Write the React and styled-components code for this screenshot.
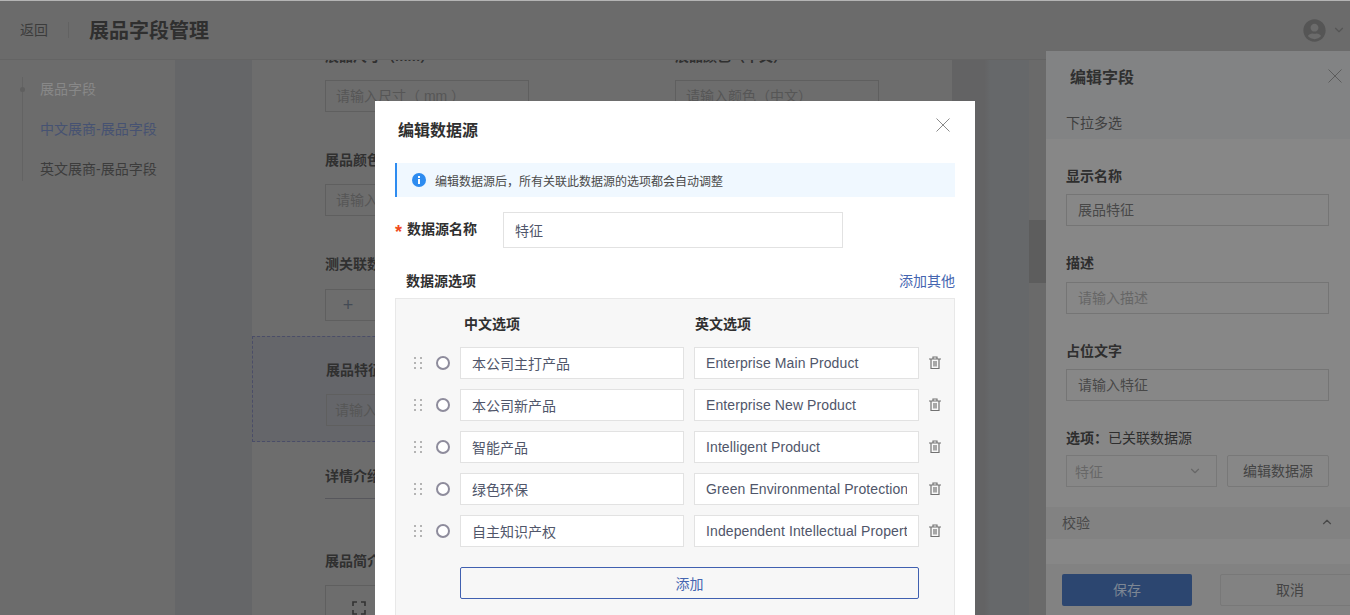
import React from "react";
import styled, { createGlobalStyle } from "styled-components";
import { ChevronDown, ChevronUp } from "lucide-react";
import { FaUserCircle } from "react-icons/fa";

const FONT = `"Liberation Sans", "Noto Sans CJK SC", sans-serif`;

const GlobalStyle = createGlobalStyle`
  html, body { margin: 0; padding: 0; height: 100%; overflow: hidden; }
  body { font-family: ${FONT}; font-size: 14px; }
  * { box-sizing: border-box; }
`;

const Page = styled.div`
  position: relative;
  width: 1350px;
  height: 615px;
  overflow: hidden;
  display: flex;
  flex-direction: column;
  background: #6d6d6d;
`;

const Header = styled.header`
  flex: 0 0 60px;
  display: flex;
  align-items: center;
  padding: 0 4px 0 20px;
  background: #6b6b6b;
  border-top: 1px solid #b4b4b4;
  border-bottom: 1px solid #646464;
  position: relative;
  z-index: 1;
`;

const Back = styled.span`
  font-size: 14px;
  color: #3c3c3c;
  padding-right: 20px;
  border-right: 1px solid #626262;
  line-height: 16px;
`;

const PageTitle = styled.h1`
  margin: 0 0 2px 20px;
  font-size: 20px;
  font-weight: 700;
  color: #2f2f2f;
`;

const User = styled.div`
  margin-left: auto;
  display: flex;
  align-items: center;
  gap: 6px;
  color: #555555;
`;

const Body = styled.div`
  flex: 1;
  display: flex;
  min-height: 0;
`;

const Side = styled.nav`
  flex: 0 0 175px;
  padding: 17px 0 0 22px;
  background: #6c6c6c;
`;

const SideList = styled.ul`
  list-style: none;
  margin: 0;
  padding: 0 0 0 17px;
  height: 104px;
  border-left: 1px solid #636363;
  position: relative;
`;

const SideDot = styled.i`
  position: absolute;
  left: -3px;
  top: 10px;
  width: 5px;
  height: 5px;
  border-radius: 50%;
  background: #5f5f5f;
`;

const SideItem = styled.li`
  height: 40px;
  line-height: 24px;
  color: ${(p) => p.$color};
`;

const Gutter = styled.div`
  flex: 0 0 77px;
  background: #656668;
`;

const Main = styled.main`
  flex: 0 0 700px;
  background: #6d6d6d;
  overflow: hidden;
`;

const Scrolled = styled.div`
  margin-top: -14px;
`;

const FieldRow = styled.div`
  display: grid;
  grid-template-columns: 350px 204px;
  padding: 0 0 0 73px;
  margin-bottom: ${(p) => p.$gap || 0}px;
`;

const Label = styled.div`
  font-size: 14px;
  font-weight: 700;
  line-height: 20px;
  margin-bottom: 14px;
  color: #303030;
  white-space: nowrap;
`;

const GhostInput = styled.div`
  width: 204px;
  height: 32px;
  line-height: 30px;
  padding: 0 ${(p) => p.$pad || 10}px;
  border: 1px solid #5f5f5f;
  color: #565656;
  white-space: nowrap;
  overflow: hidden;
`;

const PlusBox = styled.div`
  width: 60px;
  height: 32px;
  margin-top: 15px;
  padding-right: 14px;
  line-height: 30px;
  text-align: center;
  font-size: 18px;
  border: 1px solid #5f5f5f;
  color: #444b55;
`;

const Dashed = styled.section`
  height: 106px;
  margin-bottom: 24px;
  padding: 23px 0 0 73px;
  border: 1px dashed #4a4d68;
  border-right: 0;
  background: #65666a;
`;

const SectionHead = styled.div`
  margin: 0 73px 52px;
  height: 33px;
  line-height: 20px;
  font-weight: 700;
  color: #303030;
  border-bottom: 1px solid #57575c;
`;

const FullBox = styled.div`
  margin-left: 73px;
  width: 560px;
  height: 80px;
  padding: 15px 26px;
  border: 1px solid #5f5f5f;
  color: #333;
`;

const ScrollGutter = styled.div`
  flex: 0 0 77px;
  background: linear-gradient(90deg, #636364 0%, #636364 42%, #66686a 50%, #66686a 100%);
`;

const ScrollTrack = styled.div`
  flex: 1;
  display: flex;
  flex-direction: column;
  background: #6a6a6a;
  color: #353535;
`;

const ScrollBtn = styled.div`
  height: 17px;
  display: flex;
  align-items: center;
  justify-content: center;
`;

const ScrollThumb = styled.div`
  height: 63px;
  margin-top: 143px;
  margin-bottom: auto;
  background: #5d5d5d;
`;

const Drawer = styled.aside`
  position: absolute;
  left: 1046px;
  top: 51px;
  bottom: 0;
  width: 304px;
  display: flex;
  flex-direction: column;
  background: #878787;
  z-index: 2;
`;

const DrawerHead = styled.div`
  background: #828384;
  height: 88px;
  padding: 17px 20px 0 20px;
  position: relative;
`;

const DrawerTitle = styled.h3`
  margin: 0 0 0 4px;
  font-size: 16px;
  line-height: 20px;
  font-weight: 700;
  color: #303030;
`;

const DrawerKind = styled.div`
  margin-top: 25px;
  line-height: 20px;
  color: #404040;
`;

const DrawerForm = styled.div`
  padding: 27px 21px 0 20px;
  height: 368px;
`;

const DrawerLabel = styled.div`
  font-weight: 700;
  line-height: 20px;
  margin-bottom: ${(p) => p.$gap || 8}px;
  color: #2e2e2e;
  & > span { font-weight: 400; }
`;

const DrawerInput = styled.div`
  height: 32px;
  line-height: 30px;
  padding: 0 11px;
  border: 1px solid #757575;
  color: ${(p) => (p.$empty ? "#666" : "#484848")};
  margin-bottom: 27px;
`;

const SelectRow = styled.div`
  display: flex;
  gap: 10px;
  margin-top: -1px;
`;

const SelectBox = styled.div`
  width: 151px;
  height: 32px;
  padding: 0 14px 0 8px;
  display: flex;
  align-items: center;
  justify-content: space-between;
  border: 1px solid #787878;
  color: #676767;
`;

const GhostBtn = styled.div`
  flex: none;
  width: ${(p) => p.$w}px;
  height: 32px;
  line-height: 30px;
  text-align: center;
  border: 1px solid #787878;
  border-radius: 2px;
  color: #444;
`;

const Collapse = styled.div`
  height: 32px;
  padding: 0 16px 2px;
  display: flex;
  align-items: center;
  justify-content: space-between;
  background: #828282;
  color: #484848;
`;

const DrawerFoot = styled.div`
  margin-top: 25px;
  flex: 1;
  padding: 10px 0 0 16px;
  display: flex;
  gap: 28px;
  background: #828282;
`;

const SaveBtn = styled.div`
  flex: none;
  width: 130px;
  height: 32px;
  line-height: 32px;
  text-align: center;
  border-radius: 2px;
  background: #2c4670;
  color: #7d8794;
`;

const CloseLine = styled.svg`
  position: absolute;
  right: ${(p) => p.$right}px;
  top: ${(p) => p.$top}px;
  color: ${(p) => p.$color};
`;

const Modal = styled.div`
  position: absolute;
  left: 375px;
  top: 101px;
  width: 600px;
  height: 514px;
  overflow: hidden;
  padding: 0 20px;
  background: #fff;
  z-index: 3;
`;

const ModalTitle = styled.h2`
  margin: 0 0 0 3px;
  padding-top: 20px;
  height: 62px;
  font-size: 16px;
  line-height: 20px;
  font-weight: 700;
  color: #303030;
`;

const Alert = styled.div`
  height: 34px;
  display: flex;
  align-items: center;
  gap: 9px;
  padding-left: 15px;
  border-left: 2px solid #2e8cf0;
  background: #f0f8ff;
  font-size: 12px;
  color: #4a4a4a;
`;

const NameRow = styled.div`
  margin-top: 15px;
  display: flex;
  align-items: flex-start;
`;

const NameLabel = styled.label`
  width: 108px;
  padding-top: 7px;
  line-height: 20px;
  font-weight: 700;
  color: #303030;
  &::before {
    content: "*";
    display: inline-block;
    width: 12px;
    font-size: 18px;
    line-height: 1;
    vertical-align: -4px;
    color: #f04a20;
  }
`;

const TextInput = styled.input`
  display: block;
  width: ${(p) => p.$w}px;
  height: ${(p) => p.$h}px;
  padding: 0 11px;
  border: 1px solid #e2e2e2;
  border-radius: 0;
  outline: none;
  background: #fff;
  font-family: ${FONT};
  font-size: 14px;
  color: #50566a;
`;

const OptionHead = styled.div`
  margin-top: 23px;
  height: 20px;
  display: flex;
  justify-content: space-between;
  line-height: 20px;
  padding-left: 11px;
  font-weight: 700;
  color: #303030;
`;

const AddOther = styled.a`
  font-weight: 400;
  color: #4565b0;
`;

const OptionTable = styled.div`
  margin-top: 7px;
  padding: 15px 0 30px;
  border: 1px solid #e8e8e8;
  background: #f7f7f7;
`;

const Columns = styled.div`
  display: grid;
  grid-template-columns: 64px 224px 225px 35px;
  padding-bottom: 3px;
`;

const ColTitle = styled.div`
  line-height: 20px;
  font-weight: 700;
  color: #303030;
  padding-left: 4px;
  grid-column: ${(p) => p.$col};
  margin-left: ${(p) => p.$shift || 0}px;
`;

const OptionRow = styled.div`
  display: grid;
  grid-template-columns: 64px 224px 225px 35px;
  align-items: center;
  height: 32px;
  margin-top: 10px;
`;

const Handle = styled.div`
  display: flex;
  align-items: center;
  gap: 14px;
  padding-left: 18px;
`;

const Dots = styled.svg`
  color: #b4b4b4;
  flex: none;
`;

const Radio = styled.span`
  width: 14px;
  height: 14px;
  border-radius: 50%;
  border: 2px solid #8e8c9c;
  background: #fff;
  flex: none;
`;

const EnInput = styled(TextInput)`
  margin-left: 10px;
  letter-spacing: 0.1px;
`;

const Trash = styled.svg`
  margin-left: 20px;
  color: #727272;
`;

const AddBtn = styled.button`
  display: block;
  width: 459px;
  height: 32px;
  margin: 20px 0 0 64px;
  border: 1px solid #4060b0;
  border-radius: 2px;
  background: transparent;
  font-family: ${FONT};
  font-size: 14px;
  color: #4565b0;
`;

const options = [
  ["本公司主打产品", "Enterprise Main Product"],
  ["本公司新产品", "Enterprise New Product"],
  ["智能产品", "Intelligent Product"],
  ["绿色环保", "Green Environmental Protection"],
  ["自主知识产权", "Independent Intellectual Propert"],
];

function CloseIcon({ size, right, top, color }) {
  return (
    <CloseLine $right={right} $top={top} $color={color} width={size} height={size} viewBox="0 0 14 14">
      <path d="M.5.5l13 13M13.5.5l-13 13" stroke="currentColor" strokeWidth="1" fill="none" />
    </CloseLine>
  );
}

function DragDots() {
  return (
    <Dots width="8" height="14" viewBox="0 0 8 14">
      {[1, 6, 11].map((y) => (
        <g key={y} fill="currentColor">
          <rect x="0" y={y} width="2" height="2" />
          <rect x="6" y={y} width="2" height="2" />
        </g>
      ))}
    </Dots>
  );
}

function TrashIcon() {
  return (
    <Trash width="12" height="14" viewBox="0 0 12 14">
      <path d="M0 3h12M4 3V1h4v2M2 3v9.5h8V3" stroke="currentColor" strokeWidth="1.2" fill="none" />
      <rect x="4" y="5" width="4" height="5.5" fill="currentColor" opacity=".6" />
    </Trash>
  );
}

function InfoIcon() {
  return (
    <svg width="14" height="14" viewBox="0 0 14 14">
      <circle cx="7" cy="7" r="7" fill="#2e8cf0" />
      <rect x="6" y="6" width="2" height="5" fill="#fff" />
      <rect x="6" y="3" width="2" height="2" fill="#fff" />
    </svg>
  );
}

function FocusIcon() {
  return (
    <svg width="14" height="14" viewBox="0 0 14 14">
      <path d="M1 5V1h4M9 1h4v4M13 9v4H9M5 13H1V9" stroke="currentColor" strokeWidth="1.6" fill="none" />
    </svg>
  );
}

export default function App() {
  return (
    <Page>
      <GlobalStyle />
      <Header>
        <Back>返回</Back>
        <PageTitle>展品字段管理</PageTitle>
        <User>
          <FaUserCircle size={23} />
          <ChevronDown size={14} />
        </User>
      </Header>

      <Body>
        <Side>
          <SideList>
            <SideDot />
            <SideItem $color="#888888">展品字段</SideItem>
            <SideItem $color="#465272">中文展商-展品字段</SideItem>
            <SideItem $color="#3c3c3c">英文展商-展品字段</SideItem>
          </SideList>
        </Side>
        <Gutter />
        <Main>
          <Scrolled>
            <FieldRow $gap={38}>
              <div>
                <Label>展品尺寸（mm）</Label>
                <GhostInput>请输入尺寸（ mm ）</GhostInput>
              </div>
              <div>
                <Label>展品颜色（中文）</Label>
                <GhostInput>请输入颜色（中文）</GhostInput>
              </div>
            </FieldRow>
            <FieldRow $gap={38}>
              <div>
                <Label>展品颜色（英文）</Label>
                <GhostInput>请输入颜色（英文）</GhostInput>
              </div>
            </FieldRow>
            <FieldRow $gap={15}>
              <div>
                <Label>测关联数据源</Label>
                <PlusBox>+</PlusBox>
              </div>
            </FieldRow>
            <Dashed>
              <Label>展品特征</Label>
              <GhostInput $pad={8}>请输入特征</GhostInput>
            </Dashed>
            <SectionHead>详情介绍</SectionHead>
            <FieldRow>
              <Label>展品简介</Label>
            </FieldRow>
            <FullBox>
              <FocusIcon />
            </FullBox>
          </Scrolled>
        </Main>
        <ScrollGutter />
        <ScrollTrack>
          <ScrollBtn><ChevronUp size={14} strokeWidth={3} /></ScrollBtn>
          <ScrollThumb />
          <ScrollBtn><ChevronDown size={14} strokeWidth={3} /></ScrollBtn>
        </ScrollTrack>
      </Body>

      <Drawer>
        <DrawerHead>
          <DrawerTitle>编辑字段</DrawerTitle>
          <DrawerKind>下拉多选</DrawerKind>
          <CloseIcon size={14} right={8} top={18} color="#5c5c5c" />
        </DrawerHead>
        <DrawerForm>
          <DrawerLabel>显示名称</DrawerLabel>
          <DrawerInput>展品特征</DrawerInput>
          <DrawerLabel $gap={9}>描述</DrawerLabel>
          <DrawerInput $empty>请输入描述</DrawerInput>
          <DrawerLabel>占位文字</DrawerLabel>
          <DrawerInput>请输入特征</DrawerInput>
          <DrawerLabel>选项：<span>已关联数据源</span></DrawerLabel>
          <SelectRow>
            <SelectBox>特征<ChevronDown size={14} /></SelectBox>
            <GhostBtn $w={102}>编辑数据源</GhostBtn>
          </SelectRow>
        </DrawerForm>
        <Collapse>校验<ChevronUp size={14} /></Collapse>
        <DrawerFoot>
          <SaveBtn>保存</SaveBtn>
          <GhostBtn $w={140}>取消</GhostBtn>
        </DrawerFoot>
      </Drawer>

      <Modal>
        <ModalTitle>编辑数据源</ModalTitle>
        <CloseIcon size={14} right={25} top={17} color="#8a8a8a" />
        <Alert>
          <InfoIcon />
          编辑数据源后，所有关联此数据源的选项都会自动调整
        </Alert>
        <NameRow>
          <NameLabel>数据源名称</NameLabel>
          <TextInput $w={340} $h={36} readOnly value="特征" />
        </NameRow>
        <OptionHead>
          数据源选项
          <AddOther>添加其他</AddOther>
        </OptionHead>
        <OptionTable>
          <Columns>
            <ColTitle $col={2}>中文选项</ColTitle>
            <ColTitle $col={3} $shift={7}>英文选项</ColTitle>
          </Columns>
          {options.map(([zh, en]) => (
            <OptionRow key={en}>
              <Handle>
                <DragDots />
                <Radio />
              </Handle>
              <TextInput $w={224} $h={32} readOnly value={zh} />
              <EnInput $w={225} $h={32} readOnly value={en} />
              <TrashIcon />
            </OptionRow>
          ))}
          <AddBtn>添加</AddBtn>
        </OptionTable>
      </Modal>
    </Page>
  );
}
